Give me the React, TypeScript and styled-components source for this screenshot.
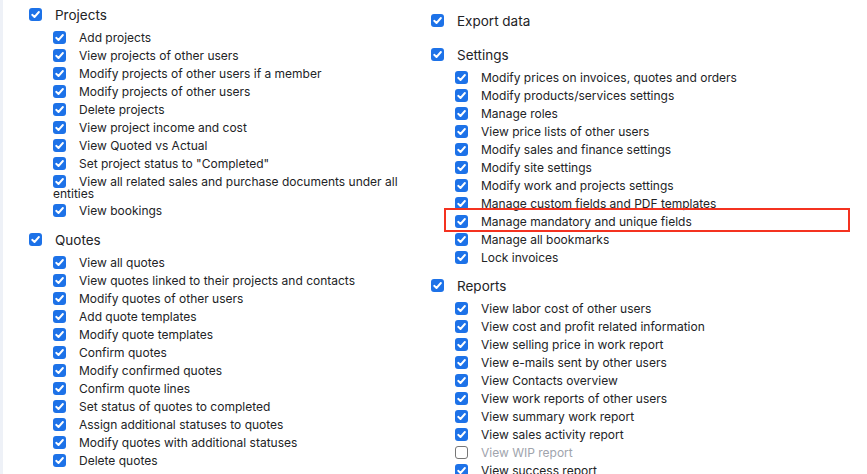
import React from 'react'
import styled, { createGlobalStyle } from 'styled-components'

const GlobalStyle = createGlobalStyle`
    html, body {
        margin: 0;
        padding: 0;
        background: #ffffff;
    }
    body {
        font-family: Inter, "Noto Sans", "Liberation Sans", sans-serif;
        color: #222326;
        overflow: hidden;
    }
`

type Perm = { label: string; checked?: boolean; highlight?: boolean }
type Group = { title: string; items?: Perm[] }

const leftGroups: Group[] = [
    {
        title: 'Projects',
        items: [
            { label: 'Add projects' },
            { label: 'View projects of other users' },
            { label: 'Modify projects of other users if a member' },
            { label: 'Modify projects of other users' },
            { label: 'Delete projects' },
            { label: 'View project income and cost' },
            { label: 'View Quoted vs Actual' },
            { label: 'Set project status to "Completed"' },
            { label: 'View all related sales and purchase documents under all entities' },
            { label: 'View bookings' },
        ],
    },
    {
        title: 'Quotes',
        items: [
            { label: 'View all quotes' },
            { label: 'View quotes linked to their projects and contacts' },
            { label: 'Modify quotes of other users' },
            { label: 'Add quote templates' },
            { label: 'Modify quote templates' },
            { label: 'Confirm quotes' },
            { label: 'Modify confirmed quotes' },
            { label: 'Confirm quote lines' },
            { label: 'Set status of quotes to completed' },
            { label: 'Assign additional statuses to quotes' },
            { label: 'Modify quotes with additional statuses' },
            { label: 'Delete quotes' },
        ],
    },
]

const rightGroups: Group[] = [
    { title: 'Export data' },
    {
        title: 'Settings',
        items: [
            { label: 'Modify prices on invoices, quotes and orders' },
            { label: 'Modify products/services settings' },
            { label: 'Manage roles' },
            { label: 'View price lists of other users' },
            { label: 'Modify sales and finance settings' },
            { label: 'Modify site settings' },
            { label: 'Modify work and projects settings' },
            { label: 'Manage custom fields and PDF templates' },
            { label: 'Manage mandatory and unique fields', highlight: true },
            { label: 'Manage all bookmarks' },
            { label: 'Lock invoices' },
        ],
    },
    {
        title: 'Reports',
        items: [
            { label: 'View labor cost of other users' },
            { label: 'View cost and profit related information' },
            { label: 'View selling price in work report' },
            { label: 'View e-mails sent by other users' },
            { label: 'View Contacts overview' },
            { label: 'View work reports of other users' },
            { label: 'View summary work report' },
            { label: 'View sales activity report' },
            { label: 'View WIP report', checked: false },
            { label: 'View success report' },
        ],
    },
]

const Check = ({ checked = true }: { checked?: boolean }) => (
    <Box $checked={checked}>
        {checked && (
            <svg width="13" height="13" viewBox="0 0 13 13">
                <path
                    d="M3.2 6.8 L5.5 9 L9.9 4"
                    fill="none"
                    stroke="#ffffff"
                    strokeWidth="1.9"
                    strokeLinecap="round"
                    strokeLinejoin="round"
                />
            </svg>
        )}
    </Box>
)

const Column = ({ groups, $top, $left }: { groups: Group[]; $top: number; $left: number }) => (
    <Col $top={$top} $left={$left}>
        {groups.map((g) => (
            <Section key={g.title}>
                <Header>
                    <Check />
                    <HeaderText>{g.title}</HeaderText>
                </Header>
                {g.items && (
                    <List>
                        {g.items.map((it) => (
                            <Item key={it.label} $highlight={!!it.highlight}>
                                <Check checked={it.checked !== false} />
                                <ItemText $disabled={it.checked === false}>{it.label}</ItemText>
                            </Item>
                        ))}
                    </List>
                )}
            </Section>
        ))}
    </Col>
)

export default function App() {
    return (
        <>
            <GlobalStyle />
            <Page>
                <Column groups={leftGroups} $top={2} $left={26} />
                <Column groups={rightGroups} $top={7.5} $left={0} />
            </Page>
        </>
    )
}

const Page = styled.div`
    display: grid;
    grid-template-columns: 428px 1fr;
    height: 474px;
    overflow: hidden;
    border-left: 3px solid #eef1f7;
    box-sizing: border-box;
`

const Col = styled.div<{ $top: number; $left: number }>`
    padding-top: ${(p) => p.$top}px;
    padding-left: ${(p) => p.$left}px;
    padding-right: 14px;
    display: flex;
    flex-direction: column;
`

const Section = styled.div`
    margin-bottom: 7px;
`

const Header = styled.div`
    height: 27px;
    display: flex;
    align-items: center;
    gap: 13px;
`

const HeaderText = styled.span`
    font-size: 13.5px;
    line-height: 27px;
`

const List = styled.div`
    padding-left: 24px;
    margin-top: -0.5px;
`

const Box = styled.span<{ $checked: boolean }>`
    display: inline-block;
    flex: none;
    width: 13px;
    height: 13px;
    box-sizing: border-box;
    border-radius: 3px;
    vertical-align: -2px;
    margin-right: 13px;
    background: ${(p) => (p.$checked ? '#1d72e8' : '#ffffff')};
    border: ${(p) => (p.$checked ? 'none' : '1px solid #767676')};
    svg {
        display: block;
    }
    ${Header} & {
        margin-right: 0;
        margin-top: -2px;
    }
`

const Item = styled.div<{ $highlight: boolean }>`
    position: relative;
    font-size: 12px;
    line-height: 11px;
    padding: 2.5px 0 2.5px;
    &::after {
        content: '';
        display: ${(p) => (p.$highlight ? 'block' : 'none')};
        position: absolute;
        left: -11px;
        right: 3px;
        top: -4px;
        bottom: -2px;
        border: 2.5px solid #f43220;
        pointer-events: none;
    }
`

const ItemText = styled.span<{ $disabled: boolean }>`
    color: ${(p) => (p.$disabled ? '#a0a4ad' : '#222326')};
`
